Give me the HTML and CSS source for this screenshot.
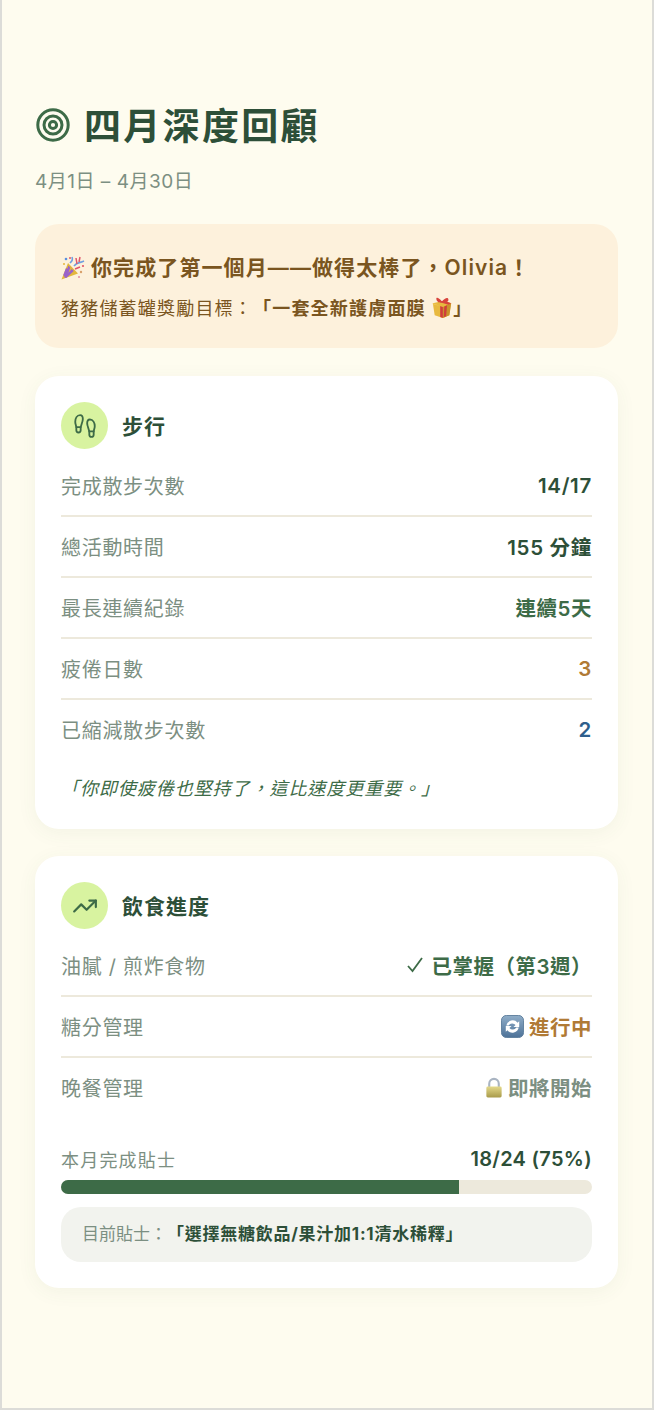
FILE: index.html
```html
<!DOCTYPE html>
<html lang="zh-Hant">
<head>
<meta charset="utf-8">
<title>四月深度回顧</title>
<link rel="stylesheet" href="styles.css">
</head>
<body>
<main class="page">
  <header class="head">
    <h1 class="title">
      <svg class="title-icon" viewBox="0 0 34 34" fill="none" stroke="#3d6b47" stroke-width="3"><circle cx="17" cy="17" r="15.2"/><circle cx="17" cy="17" r="9"/><circle cx="17" cy="17" r="3.6"/></svg>
      <span>四月深度回顧</span>
    </h1>
    <p class="date">4月1日 – 4月30日</p>
  </header>

  <section class="banner">
    <p class="banner-main"><svg class="emoji emoji-party" viewBox="0 0 24 24" role="img" aria-label="🎉"><path d="M0.500 23.500 7 7l10 10.500Z" fill="#e3b63c"/><path d="M2.300 19 5 12l2 1.500-3 8Zm5-9.500 2 2-3.500 9.800-2-.8Zm3.500 3.500 2 2-7.500 7-2-.6Z" fill="#9a62c9"/><path d="M9 7c2-2 3-3 2-6M13 10c3-4 6-3 10-5" fill="none" stroke="#6f9fe0" stroke-width="1.600"/><path d="M15 2l1 6M19 1l-1 5M14 13l5-2" stroke="#e0566a" stroke-width="1.500" fill="none"/><circle cx="5" cy="3" r="1.300" fill="#5a8fe0"/><circle cx="9" cy="2" r="1" fill="#e0566a"/><circle cx="22" cy="10" r="1.100" fill="#e0566a"/><circle cx="20" cy="16" r="1.200" fill="#d9a06a"/><circle cx="18" cy="21" r="1" fill="#e08aa0"/><circle cx="3" cy="8" r="1" fill="#e3b63c"/></svg>你完成了第一個月——做得太棒了，Olivia！</p>
    <p class="banner-sub">豬豬儲蓄罐獎勵目標：<strong>「一套全新護膚面膜 <svg class="emoji emoji-gift" viewBox="0 0 24 24" role="img" aria-label="🎁"><path d="M2 8l13-3 7 3-2 13-7 3-9-3Z" fill="#e8b93f"/><path d="M13 12l9-4-2 13-7 3Z" fill="#c9922a"/><path d="M2 8l11 4v12l-3-1V11L2 9Z" fill="#f0cb5a"/><path d="M9 6.500l5-1.500 8 3-3 1.500Z" fill="#d8443c"/><path d="M10 11l3 1v12l-3-1Zm4.500 .5l3-1.500-1 12-2.500 1Z" fill="#cf3f3a"/><path d="M12 6C8 1 5 1 6 4s3 3 6 3c3 0 7 0 7-3s-4-2-7 2Z" fill="#d8443c"/></svg>」</strong></p>
  </section>

  <section class="card">
    <div class="card-head">
      <span class="badge">
        <svg class="badge-icon" viewBox="0 0 24 24" fill="none" stroke="#3d6b47" stroke-width="1.700" stroke-linecap="round" stroke-linejoin="round"><path d="M4 16v-2.380C4 11.500 2.970 10.500 3 8c.03-2.720 1.490-6 4.500-6C9.370 2 10 3.800 10 5.500c0 3.110-2 5.660-2 8.680V16a2 2 0 1 1-4 0Z"/><path d="M20 20v-2.380c0-2.120 1.030-3.120 1-5.620-.03-2.720-1.490-6-4.500-6C14.630 6 14 7.800 14 9.500c0 3.110 2 5.660 2 8.680V20a2 2 0 1 0 4 0Z"/><path d="M16 17h4"/><path d="M4 13h4"/></svg>
      </span>
      <h2 class="card-title">步行</h2>
    </div>
    <div class="row"><span class="label">完成散步次數</span><span class="value">14/17</span></div>
    <div class="row"><span class="label">總活動時間</span><span class="value">155 分鐘</span></div>
    <div class="row"><span class="label">最長連續紀錄</span><span class="value value-green value-cjk">連續5天</span></div>
    <div class="row"><span class="label">疲倦日數</span><span class="value value-amber">3</span></div>
    <div class="row row-last"><span class="label">已縮減散步次數</span><span class="value value-blue">2</span></div>
    <p class="quote">「你即使疲倦也堅持了，這比速度更重要。」</p>
  </section>

  <section class="card">
    <div class="card-head">
      <span class="badge">
        <svg class="badge-icon" viewBox="0 0 24 24" fill="none" stroke="#3d6b47" stroke-width="2" stroke-linecap="round" stroke-linejoin="round"><path d="m22 7-8.500 8.500-5-5L2 17"/><path d="M16 7h6v6"/></svg>
      </span>
      <h2 class="card-title">飲食進度</h2>
    </div>
    <div class="row"><span class="label">油膩 / 煎炸食物</span><span class="value value-green value-cjk"><svg class="check" viewBox="0 0 16 16" fill="none" stroke="#3d6b47" stroke-width="1.800" role="img" aria-label="✓"><path d="M1 9l4.500 5L15 1"/></svg>已掌握（第3週）</span></div>
    <div class="row"><span class="label">糖分管理</span><span class="value value-amber value-cjk"><svg class="emoji emoji-sync" viewBox="0 0 24 24" role="img" aria-label="🔄"><defs><linearGradient id="syncFill" x1="0" y1="0" x2="0" y2="1"><stop offset="0" stop-color="#8fadc8"/><stop offset="1" stop-color="#4d7298"/></linearGradient></defs><rect x="0.500" y="0.500" width="23" height="23" rx="5" fill="url(#syncFill)" stroke="#5f7f9e"/><path d="M5.500 11a6.800 6.800 0 0 1 11.800-3l1.700-1.500v6h-6l2.200-2A4.300 4.300 0 0 0 8 11Z" fill="#fff"/><path d="M18.500 13a6.800 6.800 0 0 1-11.800 3L5 17.500v-6h6l-2.200 2A4.300 4.300 0 0 0 16 13Z" fill="#fff"/></svg>進行中</span></div>
    <div class="row row-last"><span class="label">晚餐管理</span><span class="value value-grey value-cjk"><svg class="emoji emoji-lock" viewBox="0 0 18 22" role="img" aria-label="🔒"><defs><linearGradient id="lockFill" x1="0" y1="0" x2="0" y2="1"><stop offset="0" stop-color="#e4d98a"/><stop offset="1" stop-color="#a89a4a"/></linearGradient></defs><path d="M4 11V7a5 5 0 0 1 10 0v4" fill="none" stroke="#a9b4c2" stroke-width="2.200"/><rect x="1" y="10" width="16" height="11.500" rx="1.500" fill="url(#lockFill)"/></svg>即將開始</span></div>
    <div class="progress-head"><span class="label label-small">本月完成貼士</span><span class="value value-small">18/24 (75%)</span></div>
    <div class="track"><div class="fill" style="width:75%"></div></div>
    <p class="tip"><span class="tip-label">目前貼士：</span><strong class="tip-text">「選擇無糖飲品/果汁加1:1清水稀釋」</strong></p>
  </section>
</main>
</body>
</html>
```

FILE: styles.css
```css
* { box-sizing: border-box; }
html, body { margin: 0; padding: 0; }
body {
  width: 654px;
  height: 1410px;
  background: #fefcef;
  font-family: Inter, "Noto Sans CJK TC", "Noto Sans", sans-serif;
  text-spacing-trim: space-all;
  overflow: hidden;
}
.page {
  height: 1410px;
  padding: 99px 36px 0 35px;
  box-shadow: inset 2px 0 0 #dcdcd8, inset -2px 0 0 #dcdcd8, inset 0 -2px 0 #dcdcd8;
}
.head { margin-bottom: 28px; }
.title {
  display: flex;
  align-items: center;
  gap: 14px;
  margin: 0;
  font-size: 37px;
  line-height: 56px;
  font-weight: 700;
  color: #2d4f38;
  letter-spacing: 2.300px;
}
.title-icon { width: 34px; height: 34px; flex: none; margin: 0 0 4px 1px; }
.date {
  margin: 13px 0 0;
  font-size: 19px;
  line-height: 28px;
  letter-spacing: 0.500px;
  color: #7c8f82;
}
.banner {
  background: #fdf1dc;
  border-radius: 24px;
  padding: 26px 26px 25px;
  margin-bottom: 28px;
}
.banner-main {
  margin: 0 0 9px;
  font-size: 21px;
  line-height: 36px;
  font-weight: 600;
  letter-spacing: 1.100px;
  color: #7a5520;
}
.banner-sub {
  margin: 0;
  font-size: 18px;
  line-height: 28px;
  letter-spacing: 1.200px;
  color: #7a5520;
}
.banner-sub strong { font-weight: 700; }
.card {
  background: #fff;
  border-radius: 24px;
  padding: 26px;
  margin-bottom: 27px;
  box-shadow: 0 4px 20px rgba(61, 107, 71, 0.06);
}
.card-head {
  display: flex;
  align-items: center;
  gap: 14px;
  margin-bottom: 7px;
}
.badge {
  width: 47px;
  height: 47px;
  border-radius: 50%;
  background: #d8f3a0;
  display: flex;
  align-items: center;
  justify-content: center;
  flex: none;
}
.badge-icon { width: 26px; height: 26px; }
.card-title {
  margin: 0;
  padding-bottom: 2px;
  font-size: 21px;
  font-weight: 600;
  letter-spacing: 1px;
  color: #2d4f38;
}
.row {
  display: flex;
  justify-content: space-between;
  align-items: center;
  height: 61px;
  padding-bottom: 1px;
  border-bottom: 2px solid #ede9dc;
}
.row-last { border-bottom-color: transparent; }
.label { font-size: 20px; letter-spacing: 0.700px; color: #7c8f82; }
.value { font-size: 20.500px; font-weight: 600; letter-spacing: 0.700px; color: #2d4f38; display: flex; align-items: center; }
.value-cjk { letter-spacing: 0.500px; }
.label-small { font-size: 18px; letter-spacing: 1.200px; }
.value-small { font-size: 20px; letter-spacing: 0.300px; }
.value-green { color: #3d6b47; }
.value-amber { color: #b07a35; }
.value-blue { color: #2e5e8c; }
.value-grey { color: #7c8f82; }
.check { width: 16px; height: 16px; margin-right: 8px; }
.quote {
  margin: 14px 0 0;
  font-size: 18px;
  line-height: 28px;
  letter-spacing: 0.950px;
  font-style: italic;
  color: #3d6b47;
}
.progress-head {
  display: flex;
  justify-content: space-between;
  align-items: center;
  margin-top: 24px;
  height: 32px;
}
.track {
  height: 14px;
  border-radius: 7px;
  background: #ede9dc;
  overflow: hidden;
  margin-top: 5px;
}
.fill { height: 100%; background: #3d6b47; }
.tip {
  margin: 13px 0 0;
  background: #f2f3ee;
  border-radius: 20px;
  padding: 13px 21px 14px;
  font-size: 17px;
  line-height: 28px;
}
.tip-label { color: #7c8f82; }
.tip-text { color: #2d4f38; font-weight: 700; letter-spacing: 0.750px; }
.emoji { flex: none; }
.emoji-party { width: 24px; height: 24px; margin-right: 6px; vertical-align: -5px; }
.emoji-gift { width: 22px; height: 22px; vertical-align: -3px; }
.emoji-sync { width: 23px; height: 23px; margin-right: 5px; }
.emoji-lock { width: 18px; height: 21px; margin-right: 5px; }
```
